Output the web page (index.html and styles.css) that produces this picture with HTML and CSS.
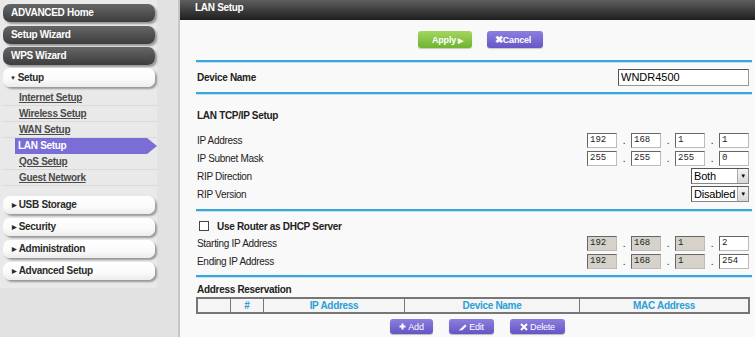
FILE: index.html
```html
<!DOCTYPE html>
<html lang="en">
<head>
    <meta charset="UTF-8">
    <title>LAN Setup</title>
    <link rel="stylesheet" href="styles.css">
</head>
<body>
    <div class="sidebar">
        <div class="nav">
            <div class="nav-dark first">ADVANCED Home</div>
            <div class="nav-dark">Setup Wizard</div>
            <div class="nav-dark">WPS Wizard</div>
            <div class="nav-light open"><span class="tri">&#9660;</span>Setup</div>
            <ul class="submenu">
                <li><a href="#">Internet Setup</a></li>
                <li><a href="#">Wireless Setup</a></li>
                <li><a href="#">WAN Setup</a></li>
                <li class="active"><a href="#">LAN Setup</a></li>
                <li><a href="#">QoS Setup</a></li>
                <li><a href="#">Guest Network</a></li>
            </ul>
            <div class="nav-light group"><span class="tri">&#9654;</span>USB Storage</div>
            <div class="nav-light"><span class="tri">&#9654;</span>Security</div>
            <div class="nav-light"><span class="tri">&#9654;</span>Administration</div>
            <div class="nav-light"><span class="tri">&#9654;</span>Advanced Setup</div>
        </div>
    </div>

    <div class="main">
        <div class="page-title">LAN Setup</div>
        <div class="content">
            <div class="actions">
                <button class="btn btn-apply">Apply <span class="arrow">&#9654;</span></button>
                <button class="btn btn-cancel"><span class="x">&#10006;</span>Cancel</button>
            </div>
            <div class="rule rule-top"></div>

            <div class="device-row">
                <span class="bold">Device Name</span>
                <input class="text-field" type="text" value="WNDR4500">
            </div>
            <div class="rule"></div>

            <div class="section-title">LAN TCP/IP Setup</div>
            <div class="row">
                <span>IP Address</span>
                <div class="ip">
                    <input class="octet" value="192"><span class="dot">.</span>
                    <input class="octet" value="168"><span class="dot">.</span>
                    <input class="octet" value="1"><span class="dot">.</span>
                    <input class="octet" value="1">
                </div>
            </div>
            <div class="row">
                <span>IP Subnet Mask</span>
                <div class="ip">
                    <input class="octet" value="255"><span class="dot">.</span>
                    <input class="octet" value="255"><span class="dot">.</span>
                    <input class="octet" value="255"><span class="dot">.</span>
                    <input class="octet" value="0">
                </div>
            </div>
            <div class="row">
                <span>RIP Direction</span>
                <div class="select"><span class="select-val">Both</span><span class="select-btn">&#9660;</span></div>
            </div>
            <div class="row">
                <span>RIP Version</span>
                <div class="select"><span class="select-val">Disabled</span><span class="select-btn">&#9660;</span></div>
            </div>
            <div class="rule rule-dhcp"></div>

            <div class="check-row">
                <span class="checkbox"></span>
                <span class="bold">Use Router as DHCP Server</span>
            </div>
            <div class="row">
                <span>Starting IP Address</span>
                <div class="ip">
                    <input class="octet disabled" value="192"><span class="dot">.</span>
                    <input class="octet disabled" value="168"><span class="dot">.</span>
                    <input class="octet disabled" value="1"><span class="dot">.</span>
                    <input class="octet" value="2">
                </div>
            </div>
            <div class="row">
                <span>Ending IP Address</span>
                <div class="ip">
                    <input class="octet disabled" value="192"><span class="dot">.</span>
                    <input class="octet disabled" value="168"><span class="dot">.</span>
                    <input class="octet disabled" value="1"><span class="dot">.</span>
                    <input class="octet" value="254">
                </div>
            </div>
            <div class="rule rule-res"></div>

            <div class="res-title">Address Reservation</div>
            <table class="res-table">
                <tr>
                    <th class="c-sel"></th>
                    <th class="c-num">#</th>
                    <th class="c-ip">IP Address</th>
                    <th class="c-name">Device Name</th>
                    <th>MAC Address</th>
                </tr>
            </table>
            <div class="res-actions">
                <button class="btn btn-purple btn-add">
                    <svg class="ico" width="7" height="7" viewBox="0 0 7 7"><path d="M3.5 0.5v6M0.5 3.5h6" stroke="#fff" stroke-width="2"/></svg>Add
                </button>
                <button class="btn btn-purple btn-edit">
                    <svg class="ico" width="8" height="8" viewBox="0 0 8 8"><path d="M2.2 6.8l4.6-4.6" stroke="#fff" stroke-width="2.2"/><path d="M0.3 7.7l0.6-2.2 1.6 1.6z" fill="#fff"/></svg>Edit
                </button>
                <button class="btn btn-purple btn-del">
                    <svg class="ico" width="8" height="8" viewBox="0 0 8 8"><path d="M1 1l6 6M7 1l-6 6" stroke="#fff" stroke-width="2"/></svg>Delete
                </button>
            </div>
        </div>
    </div>
</body>
</html>
```

FILE: styles.css
```css
body {
    margin: 0;
    width: 755px;
    height: 337px;
    display: flex;
    overflow: hidden;
    font-family: "Liberation Sans", Arial, sans-serif;
    font-size: 10px;
    letter-spacing: -0.3px;
    color: #222;
    background-color: #e2e2e2;
}

/* left navigation */
.sidebar {
    width: 178px;
    flex: none;
    border-right: 2px solid #c6c6c6;
    background-color: #e2e2e2;
}
.nav {
    width: 157px;
    padding: 4px 0 4px 0;
    background-color: #e9e9e9;
}
.nav-dark,
.nav-light {
    margin-left: 3px;
    width: 152px;
    box-sizing: border-box;
    border-radius: 7px;
    font-weight: bold;
    box-shadow: 2px 2px 2px rgba(0, 0, 0, 0.35);
}
.nav-dark {
    height: 18px;
    line-height: 18px;
    margin-bottom: 3px;
    padding-left: 8px;
    color: #fff;
    background: linear-gradient(#666, #3d3d3d);
}
.nav-dark.first {
    margin-bottom: 4px;
}
.nav-light {
    height: 18px;
    line-height: 18px;
    margin-bottom: 4px;
    padding-left: 9px;
    color: #2a2a2a;
    background: linear-gradient(#fff, #fafafa 60%, #ececec);
}
.nav-light.open {
    height: 19px;
    line-height: 19px;
    padding-left: 7px;
    margin-bottom: 3px;
}
.nav-light.group {
    margin-top: 10px;
}
.tri {
    font-size: 6px;
    margin-right: 2px;
    vertical-align: 1px;
}
.submenu {
    list-style: none;
    margin: 0;
    padding: 0;
}
.submenu li {
    height: 16px;
    line-height: 16px;
    margin-left: 3px;
    padding-left: 16px;
    border-bottom: 1px solid #dadada;
    box-sizing: border-box;
}
.submenu a {
    color: #4a4a4a;
    font-weight: bold;
    text-decoration: underline;
}
.submenu li.active {
    margin-left: 15px;
    padding-left: 3px;
    width: 142px;
    background-color: #7a6ed6;
    border-bottom: none;
    clip-path: polygon(0 0, 93% 0, 100% 50%, 93% 100%, 0 100%);
}
.submenu li.active a {
    color: #fff;
    text-decoration: none;
}

/* main panel */
.main {
    flex: 1;
    background-color: #f9f9f9;
}
.page-title {
    height: 20px;
    padding-left: 15px;
    line-height: 16px;
    color: #fff;
    font-weight: bold;
    background: linear-gradient(#5e5e5e, #1e1e1e);
}
.content {
    padding: 0 3px 0 16px;
}
.actions {
    display: flex;
    gap: 15px;
    margin-top: 11px;
    padding-left: 222px;
}
.btn {
    height: 16px;
    padding: 0;
    border: none;
    border-radius: 3px;
    font-family: "Liberation Sans", Arial, sans-serif;
    font-size: 9px;
    font-weight: bold;
    letter-spacing: -0.2px;
    color: #fff;
    cursor: pointer;
}
.btn-apply {
    width: 54px;
    height: 17px;
    padding-left: 14px;
    text-align: left;
    background: linear-gradient(#a4d65e, #6fb331);
    box-shadow: 0 1px 1px rgba(0, 0, 0, 0.2);
}
.btn-apply .arrow {
    font-size: 7px;
}
.btn-cancel {
    width: 56px;
    height: 17px;
    padding-left: 8px;
    text-align: left;
    background: linear-gradient(#8b7fe0, #6657c6);
    box-shadow: 0 1px 1px rgba(0, 0, 0, 0.2);
}
.btn-cancel .x {
    font-size: 10px;
}
.rule {
    height: 2px;
    background-color: #3aa6db;
    box-shadow: 0 1px 0 #bfe3f3;
}
.rule-top {
    margin-top: 12px;
}
.bold {
    font-weight: bold;
}
.device-row {
    height: 30px;
    display: flex;
    align-items: center;
    justify-content: space-between;
    padding-left: 1px;
}
.text-field {
    width: 131px;
    height: 17px;
    box-sizing: border-box;
    margin: 0 3px 0 0;
    padding: 0 2px;
    border: 1px solid #999;
    border-top-color: #555;
    border-left-color: #555;
    font-family: "Liberation Sans", Arial, sans-serif;
    font-size: 11px;
    color: #000;
    background-color: #fff;
}
.section-title {
    height: 14px;
    line-height: 14px;
    margin: 15px 0 8px 1px;
    font-weight: bold;
}
.row {
    height: 18px;
    display: flex;
    align-items: center;
    justify-content: space-between;
    padding-left: 1px;
}
.ip {
    display: flex;
    align-items: center;
    margin-right: 3px;
}
.octet {
    width: 30px;
    height: 15px;
    box-sizing: border-box;
    margin: 0;
    padding: 0 2px;
    border: 1px solid #bbb;
    border-top-color: #666;
    border-left-color: #666;
    font-family: "Liberation Mono", "Courier New", monospace;
    font-size: 9px;
    letter-spacing: 0;
    color: #222;
    background-color: #fff;
}
.octet.disabled {
    background-color: #d6d2ca;
}
.dot {
    width: 14px;
    text-align: center;
}
.select {
    width: 58px;
    height: 16px;
    box-sizing: border-box;
    margin-right: 3px;
    display: flex;
    border: 1px solid #888;
    border-top-color: #555;
    border-left-color: #555;
    background-color: #fff;
    font-size: 11px;
    letter-spacing: -0.2px;
}
.select-val {
    flex: 1;
    line-height: 14px;
    padding-left: 2px;
    color: #000;
}
.select-btn {
    width: 10px;
    line-height: 14px;
    text-align: center;
    font-size: 6px;
    color: #000;
    background: linear-gradient(#f4f4f4, #d8d8d8);
    border-left: 1px solid #aaa;
}
.rule-dhcp {
    margin-top: 6px;
}
.check-row {
    height: 16px;
    margin-top: 7px;
    display: flex;
    align-items: center;
    padding-left: 3px;
}
.checkbox {
    width: 8px;
    height: 8px;
    margin-right: 8px;
    border: 1px solid #444;
    background-color: #fff;
}
.rule-res {
    margin-top: 5px;
}
.res-title {
    height: 12px;
    line-height: 12px;
    margin-top: 7px;
    font-weight: bold;
    padding-left: 1px;
}
.res-table {
    width: 554px;
    margin-top: 1px;
    border-collapse: collapse;
    border: 2px solid #777;
}
.res-table th {
    height: 13px;
    padding: 0;
    border: 1px solid #777;
    color: #2a9fd6;
    font-size: 10px;
    background-color: #f5f5f5;
}
.c-sel {
    width: 32px;
}
.c-num {
    width: 32px;
}
.c-ip {
    width: 140px;
}
.c-name {
    width: 174px;
}
.res-actions {
    display: flex;
    gap: 16px;
    margin-top: 5px;
    padding-left: 194px;
}
.btn-purple {
    height: 15px;
    display: flex;
    align-items: center;
    justify-content: center;
    gap: 2px;
    font-weight: normal;
    background: linear-gradient(#8b7fe0, #6455c4);
    box-shadow: 0 1px 1px rgba(0, 0, 0, 0.25);
}
.btn-add {
    width: 43px;
}
.btn-edit {
    width: 45px;
}
.btn-del {
    width: 55px;
}
```
